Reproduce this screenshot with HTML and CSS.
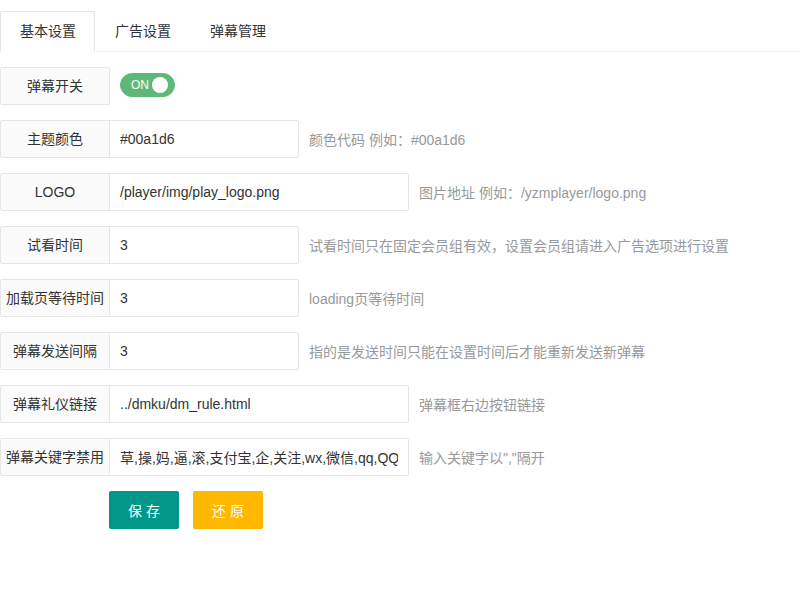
FILE: index.html
```html
<!DOCTYPE html>
<html lang="zh-CN">
<head>
    <meta charset="UTF-8">
    <meta name="viewport" content="width=device-width, initial-scale=1.0">
    <title>播放器设置</title>
    <link rel="stylesheet" href="styles.css">
</head>
<body>
    <div class="tab">
        <ul class="tab-title">
            <li class="active">基本设置</li>
            <li>广告设置</li>
            <li>弹幕管理</li>
        </ul>
        <div class="tab-content">
            <form class="form-pane" onsubmit="return false;">
                <div class="form-item">
                    <label class="form-label">弹幕开关</label>
                    <div class="switch on">
                        <em>ON</em>
                        <i class="knob"></i>
                    </div>
                </div>
                <div class="form-item">
                    <label class="form-label" for="color">主题颜色</label>
                    <input class="input" type="text" id="color" value="#00a1d6">
                    <div class="form-mid">颜色代码 例如：#00a1d6</div>
                </div>
                <div class="form-item">
                    <label class="form-label" for="logo">LOGO</label>
                    <input class="input wide" type="text" id="logo" value="/player/img/play_logo.png">
                    <div class="form-mid">图片地址 例如：/yzmplayer/logo.png</div>
                </div>
                <div class="form-item">
                    <label class="form-label" for="trytime">试看时间</label>
                    <input class="input" type="text" id="trytime" value="3">
                    <div class="form-mid">试看时间只在固定会员组有效，设置会员组请进入广告选项进行设置</div>
                </div>
                <div class="form-item">
                    <label class="form-label" for="waittime">加载页等待时间</label>
                    <input class="input" type="text" id="waittime" value="3">
                    <div class="form-mid">loading页等待时间</div>
                </div>
                <div class="form-item">
                    <label class="form-label" for="sendtime">弹幕发送间隔</label>
                    <input class="input" type="text" id="sendtime" value="3">
                    <div class="form-mid">指的是发送时间只能在设置时间后才能重新发送新弹幕</div>
                </div>
                <div class="form-item">
                    <label class="form-label" for="rule">弹幕礼仪链接</label>
                    <input class="input wide" type="text" id="rule" value="../dmku/dm_rule.html">
                    <div class="form-mid">弹幕框右边按钮链接</div>
                </div>
                <div class="form-item">
                    <label class="form-label" for="words">弹幕关键字禁用</label>
                    <input class="input wide" type="text" id="words" value="草,操,妈,逼,滚,支付宝,企,关注,wx,微信,qq,QQ">
                    <div class="form-mid">输入关键字以","隔开</div>
                </div>
                <div class="form-buttons">
                    <button class="btn" type="submit">保存</button>
                    <button class="btn btn-warm" type="reset">还原</button>
                </div>
            </form>
        </div>
    </div>
</body>
</html>
```

FILE: styles.css
```css
body {
    margin: 0;
    font-family: "Liberation Sans", "Noto Sans CJK SC", sans-serif;
    font-size: 14px;
    color: #333;
    background-color: #fff;
}
.tab {
    padding-top: 11px;
}
.tab-title {
    display: flex;
    align-items: flex-start;
    margin: 0;
    padding: 0;
    list-style: none;
    border-bottom: 1px solid #eee;
}
.tab-title li {
    padding: 0 18px 0 19px;
    line-height: 39px;
    border: 1px solid transparent;
    margin-bottom: -1px;
    cursor: pointer;
    color: #333;
}
.tab-title li.active {
    border-color: #e6e6e6;
    border-bottom-color: #fff;
    border-radius: 2px 2px 0 0;
    background-color: #fff;
}
.tab-content {
    padding: 15px 0;
}
.form-item {
    display: flex;
    align-items: center;
    margin-bottom: 15px;
}
.form-label {
    box-sizing: border-box;
    width: 110px;
    height: 38px;
    padding: 8px 5px;
    line-height: 20px;
    text-align: center;
    white-space: nowrap;
    border: 1px solid #e6e6e6;
    border-radius: 2px 0 0 2px;
    background-color: #fbfbfb;
    flex-shrink: 0;
}
.input {
    box-sizing: border-box;
    width: 190px;
    height: 38px;
    margin: 0 10px 0 -1px;
    padding: 0 10px;
    border: 1px solid #e6e6e6;
    border-radius: 0 2px 2px 0;
    font-family: inherit;
    font-size: 14px;
    color: #333;
    background-color: #fff;
    outline: none;
}
.input.wide {
    width: 300px;
}
.form-mid {
    color: #999;
    white-space: nowrap;
}
.switch {
    box-sizing: border-box;
    display: inline-flex;
    align-items: center;
    justify-content: space-between;
    align-self: flex-start;
    width: 55px;
    height: 24px;
    margin: 6px 0 0 10px;
    padding: 0 6px 0 10px;
    border: 1px solid #d2d2d2;
    border-radius: 20px;
    background-color: #fff;
    cursor: pointer;
}
.switch.on {
    border-color: #5fb878;
    background-color: #5fb878;
}
.switch em {
    font-style: normal;
    font-size: 12px;
    color: #fff;
}
.knob {
    width: 16px;
    height: 16px;
    border-radius: 50%;
    background-color: #fff;
}
.form-buttons {
    display: flex;
    gap: 14px;
    margin-left: 109px;
}
.btn {
    width: 70px;
    height: 38px;
    padding: 0;
    border: none;
    border-radius: 2px;
    background-color: #009688;
    color: #fff;
    font-family: inherit;
    font-size: 14px;
    letter-spacing: 4px;
    text-indent: 4px;
    cursor: pointer;
}
.btn-warm {
    background-color: #ffb800;
}
```
